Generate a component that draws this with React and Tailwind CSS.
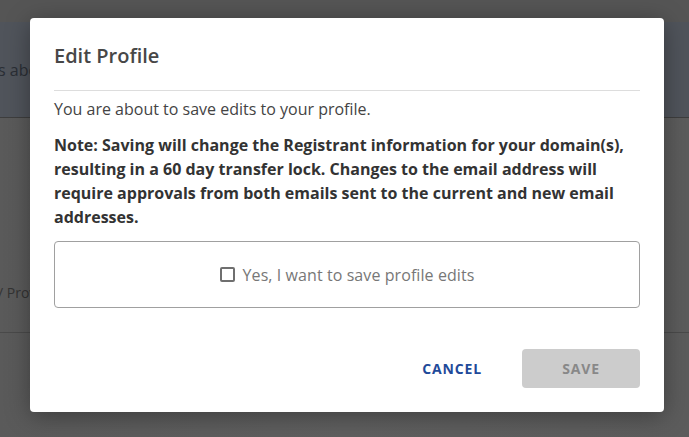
import React from "react";

// Underlying page, dimmed by the modal overlay
function BackgroundPage() {
  return (
    <div className="flex flex-col h-full">
      <div className="h-[22px] bg-[#555555]" />
      <div className="h-[96px] bg-[#50545b] border-b border-[#3e3e3e] flex items-center overflow-hidden">
        <span className="text-[16px] text-[#2a2e35] -ml-[2px] whitespace-nowrap">s about your profile</span>
      </div>
      <div className="h-[160px]" />
      <div className="h-[28px] flex items-center overflow-hidden">
        <span className="text-[14px] text-[#333] -ml-[2px] whitespace-nowrap">/ Provider</span>
      </div>
      <div className="h-[27px] border-b border-[#4a4a4a]" />
      <div className="flex-1" />
    </div>
  );
}

export default function App() {
  return (
    <div
      className="relative w-full h-[437px] overflow-hidden bg-gradient-to-r from-[#5a5a5a] via-[#5f5f5f] to-[#5c5c5c]"
      style={{ fontFamily: '"Open Sans", "Noto Sans", sans-serif' }}
    >
      <BackgroundPage />

      <div className="absolute left-[30px] top-[18px] w-[634px] h-[394px] bg-white rounded-[4px] shadow-[0_4px_24px_rgba(0,0,0,0.35)] px-6 pt-6">
        <h2 className="text-[20px] leading-[28px] font-semibold text-[#474747]">Edit Profile</h2>
        <div className="mt-[20px] border-t border-[#dddddd]" />
        <p className="mt-[6px] text-[16px] leading-[24px] text-[#444444]">
          You are about to save edits to your profile.
        </p>
        <p className="mt-3 text-[16px] leading-[24px] font-bold text-[#333333]">
          Note: Saving will change the Registrant information for your domain(s), resulting in a 60 day transfer lock. Changes to the email address will require approvals from both emails sent to the current and new email addresses.
        </p>
        <div className="mt-3 h-[67px] border border-[#a0a0a0] rounded-[4px] flex items-center justify-center">
          <label className="flex items-center gap-[8px] text-[16px] text-[#777777] tracking-[0.005em]">
            <span className="w-[15px] h-[15px] border-2 border-[#6f6f6f] rounded-[2px] bg-white" />
            Yes, I want to save profile edits
          </label>
        </div>
        <div className="mt-[41px] flex justify-end items-center gap-[40px]">
          <button className="h-[39px] text-[14px] font-bold tracking-[0.06em] text-[#1f4a9a]">
            CANCEL
          </button>
          <button className="w-[118px] h-[39px] rounded-[4px] bg-[#cccccc] text-[14px] font-bold tracking-[0.06em] text-[#888888]">
            SAVE
          </button>
        </div>
      </div>
    </div>
  );
}
